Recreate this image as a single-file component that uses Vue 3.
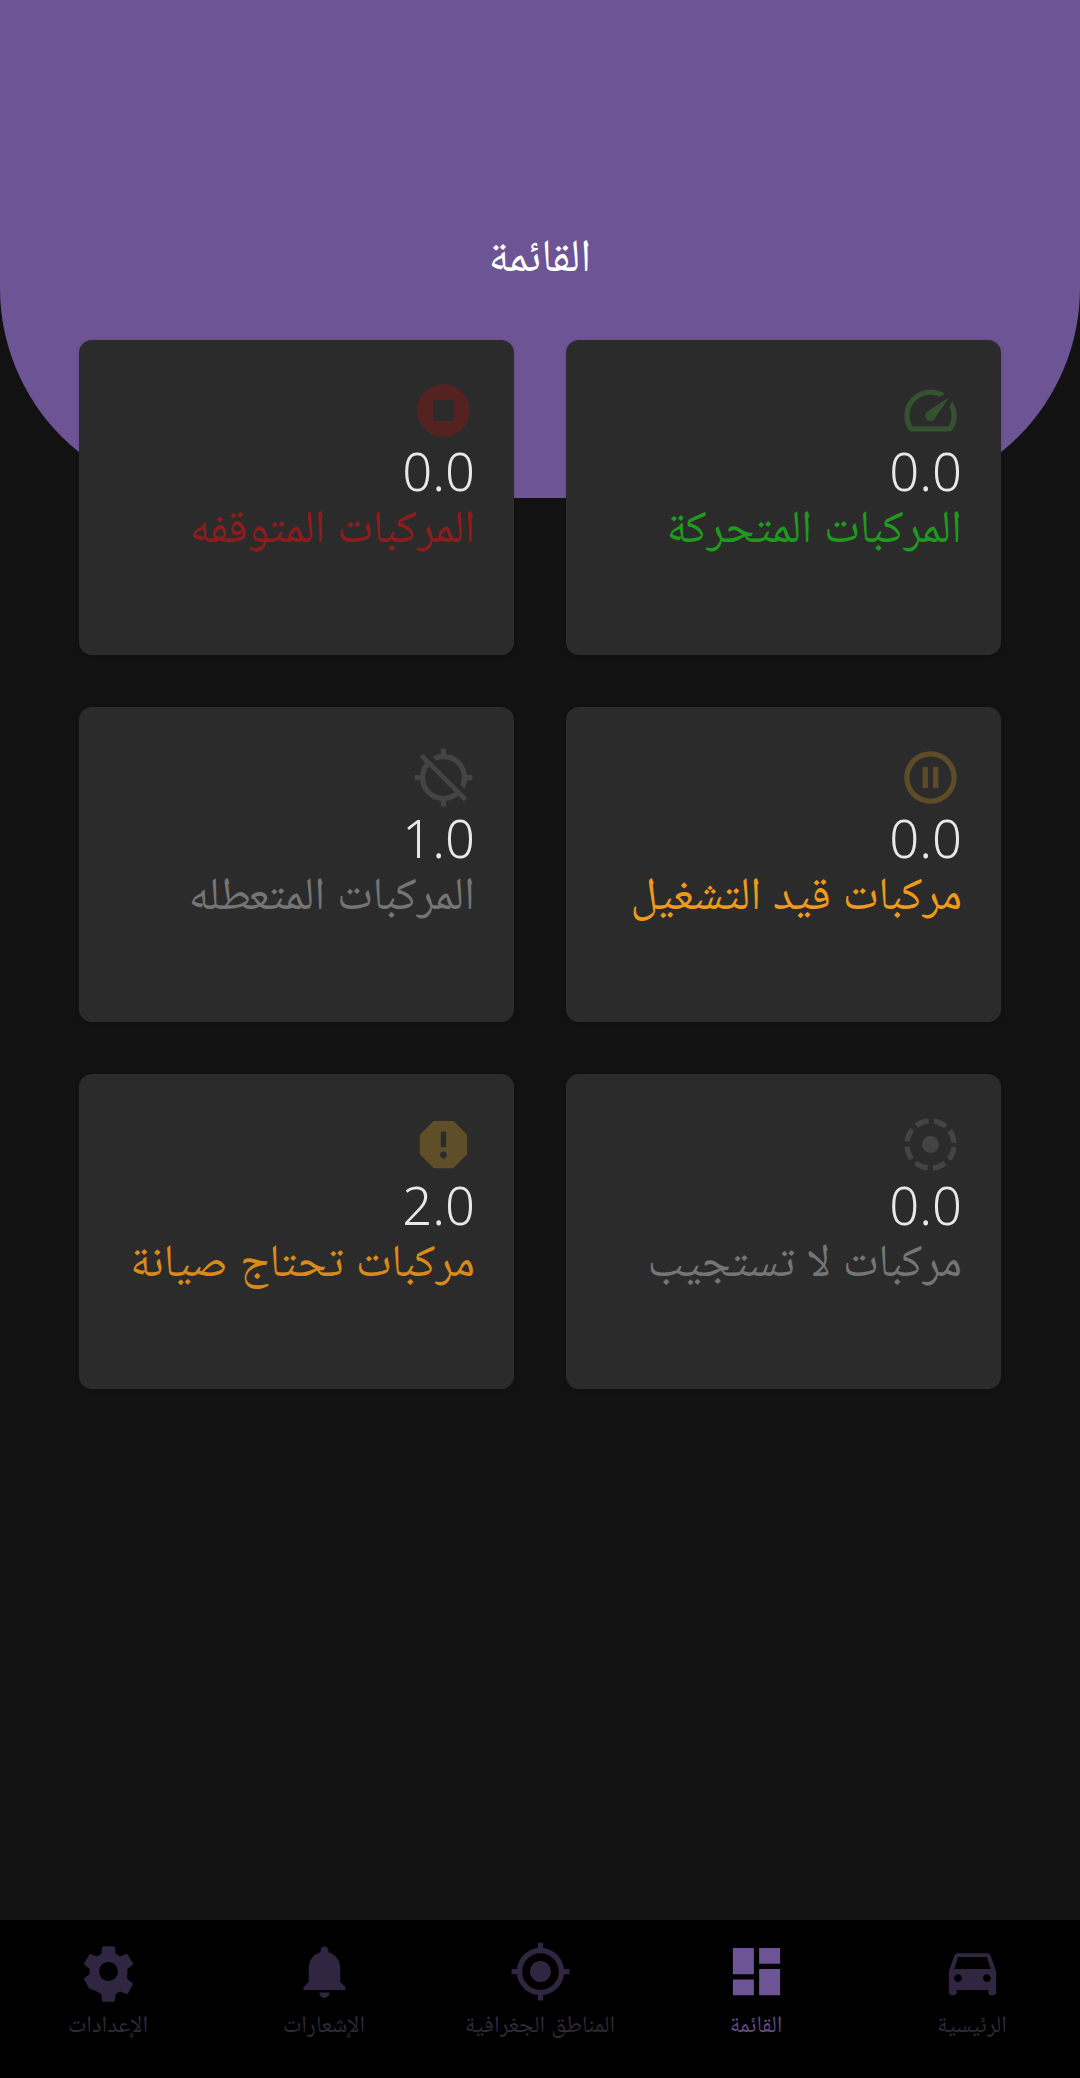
<template>
  <div class="page" dir="rtl">
    <div class="header">
      <h1 class="title">القائمة</h1>
    </div>

    <div class="grid">
      <div class="card" v-for="card in cards" :key="card.label">
        <svg v-if="card.dashed" class="card-icon" viewBox="0 0 24 24" :style="{ fill: card.iconColor }">
          <circle class="dash" cx="12" cy="12" r="9" :style="{ stroke: card.iconColor }" />
          <circle cx="12" cy="12" r="3.2" />
        </svg>
        <svg v-else class="card-icon" viewBox="0 0 24 24" :style="{ fill: card.iconColor }">
          <path :d="card.icon" />
        </svg>
        <div class="value" dir="ltr">{{ card.value }}</div>
        <div class="label" :style="{ color: card.color }">{{ card.label }}</div>
      </div>
    </div>

    <nav class="bottom-nav">
      <div class="nav-item" :class="{ active: item.active }" v-for="item in navItems" :key="item.label">
        <svg class="nav-icon" viewBox="0 0 24 24"><path :d="item.icon" /></svg>
        <span>{{ item.label }}</span>
      </div>
    </nav>
  </div>
</template>

<script setup>
const cards = [
  {
    label: 'المركبات المتحركة',
    value: '0.0',
    color: '#1f9a1f',
    iconColor: '#34522f',
    icon: 'M20.38 8.57l-1.23 1.85a8 8 0 0 1-.22 7.58H5.07A8 8 0 0 1 15.58 6.85l1.85-1.23A10 10 0 0 0 3.35 19a2 2 0 0 0 1.72 1h13.85a2 2 0 0 0 1.74-1 10 10 0 0 0-.27-10.44zm-9.79 6.84a2 2 0 0 0 2.83 0l5.66-8.49-8.49 5.66a2 2 0 0 0 0 2.83z'
  },
  {
    label: 'المركبات المتوقفه',
    value: '0.0',
    color: '#8f1c1c',
    iconColor: '#552222',
    icon: 'M12 2C6.48 2 2 6.48 2 12s4.48 10 10 10 10-4.48 10-10S17.52 2 12 2zm4 14H8V8h8v8z'
  },
  {
    label: 'مركبات قيد التشغيل',
    value: '0.0',
    color: '#f09a1a',
    iconColor: '#5e4c28',
    icon: 'M9 16h2V8H9v8zm3-14C6.48 2 2 6.48 2 12s4.48 10 10 10 10-4.48 10-10S17.52 2 12 2zm0 18c-4.41 0-8-3.59-8-8s3.59-8 8-8 8 3.59 8 8-3.59 8-8 8zm1-4h2V8h-2v8z'
  },
  {
    label: 'المركبات المتعطله',
    value: '1.0',
    color: '#757575',
    iconColor: '#444444',
    icon: 'M20.94 11c-.46-4.17-3.77-7.48-7.94-7.94V1h-2v2.06c-1.13.12-2.19.46-3.14.97l1.5 1.5C10.16 5.19 11.06 5 12 5c3.87 0 7 3.13 7 7 0 .94-.19 1.84-.52 2.65l1.5 1.5c.5-.96.84-2.02.97-3.15H23v-2h-2.06zM3 4.27l2.04 2.04C3.97 7.62 3.25 9.23 3.06 11H1v2h2.06c.46 4.17 3.77 7.48 7.94 7.94V23h2v-2.06c1.77-.2 3.38-.91 4.69-1.98L19.73 21 21 19.73 4.27 3 3 4.27zm13.27 13.27C15.09 18.45 13.61 19 12 19c-3.87 0-7-3.13-7-7 0-1.61.55-3.09 1.46-4.27l9.81 9.81z'
  },
  {
    label: 'مركبات لا تستجيب',
    value: '0.0',
    color: '#757575',
    iconColor: '#444444',
    dashed: true
  },
  {
    label: 'مركبات تحتاج صيانة',
    value: '2.0',
    color: '#d98a18',
    iconColor: '#5e4f28',
    icon: 'M15.73 3H8.27L3 8.27v7.46L8.27 21h7.46L21 15.73V8.27L15.73 3zM12 17.3c-.72 0-1.3-.58-1.3-1.3 0-.72.58-1.3 1.3-1.3.72 0 1.3.58 1.3 1.3 0 .72-.58 1.3-1.3 1.3zm1-4.3h-2V7h2v6z'
  }
]

const navItems = [
  {
    label: 'الرئيسية',
    icon: 'M18.92 6.01C18.72 5.42 18.16 5 17.5 5h-11c-.66 0-1.21.42-1.42 1.01L3 12v8c0 .55.45 1 1 1h1c.55 0 1-.45 1-1v-1h12v1c0 .55.45 1 1 1h1c.55 0 1-.45 1-1v-8l-2.08-5.99zM6.5 16c-.83 0-1.5-.67-1.5-1.5S5.67 13 6.5 13s1.5.67 1.5 1.5S7.33 16 6.5 16zm11 0c-.83 0-1.5-.67-1.5-1.5s.67-1.5 1.5-1.5 1.5.67 1.5 1.5-.67 1.5-1.5 1.5zM5 11l1.5-4.5h11L19 11H5z'
  },
  {
    label: 'القائمة',
    active: true,
    icon: 'M3 13h8V3H3v10zm0 8h8v-6H3v6zm10 0h8V11h-8v10zm0-18v6h8V3h-8z'
  },
  {
    label: 'المناطق الجغرافية',
    icon: 'M12 8c-2.21 0-4 1.79-4 4s1.79 4 4 4 4-1.79 4-4-1.79-4-4-4zm8.94 3c-.46-4.17-3.77-7.48-7.94-7.94V1h-2v2.06C6.83 3.52 3.52 6.83 3.06 11H1v2h2.06c.46 4.17 3.77 7.48 7.94 7.94V23h2v-2.06c4.17-.46 7.48-3.77 7.94-7.94H23v-2h-2.06zM12 19c-3.87 0-7-3.13-7-7s3.13-7 7-7 7 3.13 7 7-3.13 7-7 7z'
  },
  {
    label: 'الإشعارات',
    icon: 'M12 22c1.1 0 2-.9 2-2h-4c0 1.1.89 2 2 2zm6-6v-5c0-3.07-1.64-5.64-4.5-6.32V4c0-.83-.67-1.5-1.5-1.5s-1.5.67-1.5 1.5v.68C7.63 5.36 6 7.92 6 11v5l-2 2v1h16v-1l-2-2z'
  },
  {
    label: 'الإعدادات',
    icon: 'M19.14 12.94c.04-.3.06-.61.06-.94 0-.32-.02-.64-.07-.94l2.03-1.58c.18-.14.23-.41.12-.61l-1.92-3.32c-.12-.22-.37-.29-.59-.22l-2.39.96c-.5-.38-1.03-.7-1.62-.94l-.36-2.54c-.04-.24-.24-.41-.48-.41h-3.84c-.24 0-.43.17-.47.41l-.36 2.54c-.59.24-1.13.57-1.62.94l-2.39-.96c-.22-.08-.47 0-.59.22L2.74 8.87c-.12.21-.08.47.12.61l2.03 1.58c-.05.3-.09.63-.09.94s.02.64.07.94l-2.03 1.58c-.18.14-.23.41-.12.61l1.92 3.32c.12.22.37.29.59.22l2.39.96c.5.38 1.03.7 1.62.94l.36 2.54c.05.24.24.41.48.41h3.84c.24 0 .44-.17.47-.41l.36-2.54c.59-.24 1.13-.56 1.62-.94l2.39.96c.22.08.47 0 .59-.22l1.92-3.32c.12-.22.07-.47-.12-.61l-2.01-1.58zM12 15.6c-1.98 0-3.6-1.62-3.6-3.6s1.62-3.6 3.6-3.6 3.6 1.62 3.6 3.6-1.62 3.6-3.6 3.6z'
  }
]
</script>

<style>
body {
  background-color: #121212;
}
</style>

<style scoped>
.page {
  position: relative;
  width: 1080px;
  height: 2078px;
  background-color: #121212;
  font-family: "Noto Sans", "Noto Naskh Arabic", "Open Sans", sans-serif;
  overflow: hidden;
  display: flex;
  flex-direction: column;
}

.header {
  height: 498px;
  margin-bottom: -158px;
  background-color: #6d5595;
  border-radius: 0 0 210px 210px;
  box-sizing: border-box;
  padding-top: 226px;
  flex-shrink: 0;
}

.title {
  margin: 0;
  color: #fff;
  font-size: 46px;
  font-weight: 400;
  line-height: 54px;
  text-align: center;
}

.grid {
  position: relative;
  display: grid;
  grid-template-columns: 435px 435px;
  grid-auto-rows: 315px;
  gap: 52px;
  padding: 0 79px;
}

.card {
  background-color: #2b2b2b;
  border-radius: 13px;
  padding: 39px;
  box-sizing: border-box;
  display: flex;
  flex-direction: column;
  align-items: flex-start;
  box-shadow: 0 1px 4px rgba(0, 0, 0, 0.15);
}

.card-icon {
  width: 63px;
  height: 63px;
  flex-shrink: 0;
}

.dash {
  fill: none;
  stroke-width: 2;
  stroke-dasharray: 5 2.07;
  stroke-dashoffset: 6.035;
}

.value {
  color: #e8e8e8;
  font-size: 52.5px;
  font-weight: 300;
  line-height: 58px;
}

.label {
  font-size: 46px;
  line-height: 48px;
  white-space: nowrap;
}

.bottom-nav {
  margin-top: auto;
  height: 158px;
  background-color: #000;
  display: flex;
  flex-shrink: 0;
  box-sizing: border-box;
  padding-top: 20px;
}

.nav-item {
  flex: 1;
  display: flex;
  flex-direction: column;
  align-items: center;
  color: #2f2a38;
  font-size: 23.6px;
  line-height: 26px;
}

.nav-icon {
  width: 63px;
  height: 63px;
  fill: #302642;
  margin-bottom: 7px;
}

.nav-item.active {
  color: #5f4c80;
}

.nav-item.active .nav-icon {
  fill: #6d5595;
}
</style>
